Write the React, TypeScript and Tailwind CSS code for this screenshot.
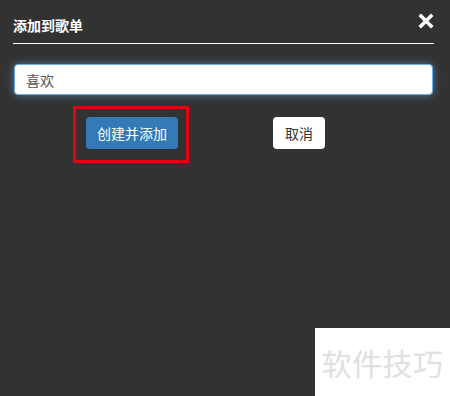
const font = { fontFamily: '"Noto Sans CJK SC", "Liberation Sans", sans-serif' };

function CloseIcon() {
  return (
    <svg width="16" height="16" viewBox="0 0 16 16" className="mt-[-1px]">
      <path d="M3 3 L13 13 M13 3 L3 13" stroke="#fff" strokeWidth="3.6" strokeLinecap="square" />
    </svg>
  );
}

export default function App() {
  return (
    <div
      className="relative w-[450px] h-[396px] overflow-hidden bg-[#323232] pl-[13px] pr-[16px]"
      style={font}
    >
      {/* Header */}
      <div className="flex items-start justify-between pt-[14px] pb-[8px] border-b border-white">
        <div className="mt-[1px] text-[14px] leading-[20px] font-bold text-white">添加到歌单</div>
        <CloseIcon />
      </div>

      {/* Input */}
      <div className="mt-[20px] mx-[1px]">
        <input
          defaultValue="喜欢"
          className="block w-full h-[31px] rounded-[4px] border border-[#66afe9] bg-white px-[11px] text-[14px] text-[#555] outline-none shadow-[0_0_8px_rgba(102,175,233,0.6)]"
        />
      </div>

      {/* Buttons */}
      <div className="flex items-start mt-[11px] ml-[60px]">
        <div className="border-[3px] border-[#e60012] pl-[10px] pr-[8px] pt-[8px] pb-[11px]">
          <button className="w-[92px] h-[32px] rounded-[4px] bg-[#337ab7] text-[14px] text-white">
            创建并添加
          </button>
        </div>
        <button className="ml-[84px] mt-[11px] w-[52px] h-[32px] rounded-[4px] bg-white text-[14px] text-[#333]">
          取消
        </button>
      </div>

      {/* Watermark */}
      <div className="absolute right-0 bottom-0 w-[135px] h-[68px] bg-white flex items-center justify-center">
        <span className="text-[30px] leading-none text-[#e0e0e0] tracking-[0.5px]">软件技巧</span>
      </div>
    </div>
  );
}
